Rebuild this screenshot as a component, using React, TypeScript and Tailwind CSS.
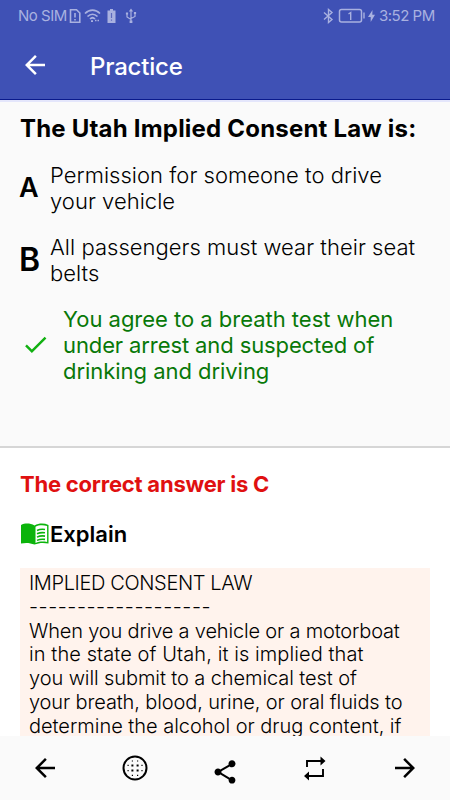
import { MdArrowBack, MdArrowForward, MdCheck, MdShare } from "react-icons/md";

const answers = [
  { letter: "A", size: "text-[27px]", lines: ["Permission for someone to drive", "your vehicle"] },
  { letter: "B", size: "text-[32px]", lines: ["All passengers must wear their seat", "belts"] },
];

const correct = [
  { text: "You agree to a breath test when", cls: "tracking-[-0.02px]" },
  { text: "under arrest and suspected of", cls: "tracking-[-0.11px]" },
  { text: "drinking and driving", cls: "tracking-[-0.04px]" },
];

const explanation = [
  { text: "IMPLIED CONSENT LAW", cls: "tracking-[-0.37px]" },
  { text: "-------------------", cls: "tracking-[0.53px]" },
  { text: "When you drive a vehicle or a motorboat", cls: "tracking-[-0.17px]" },
  { text: "in the state of Utah, it is implied that", cls: "tracking-[0.09px]" },
  { text: "you will submit to a chemical test of", cls: "tracking-[-0.09px]" },
  { text: "your breath, blood, urine, or oral fluids to", cls: "tracking-[-0.12px]" },
  { text: "determine the alcohol or drug content, if", cls: "tracking-[-0.02px]" },
];

function StatusBar() {
  return (
    <div className="flex h-8 items-center pl-[18px] pr-[15px] text-[15px] text-[#a9b1e0]">
      <span className="w-[49px] whitespace-nowrap tracking-[-0.5px]">No SIM</span>
      <svg className="ml-0.5 h-4 w-3" viewBox="0 0 12 16" fill="none" stroke="currentColor" strokeWidth="1.6">
        <path d="M1.500 1.700h6L10.800 5v9.300H1.500zM6 5v4.500M6 11v1.600" />
      </svg>
      <svg className="ml-[3px] h-4 w-[17px]" viewBox="0 0 17 16" fill="none" stroke="currentColor" strokeWidth="1.7">
        <path d="M1 5.500C5.500 1 11.500 1 16 5.500M3.500 8.500C6.500 5.500 10.500 5.500 13.500 8.500M6 11c1.500-1.500 3.500-1.500 5 0" />
        <path d="M7 13.200h2M11 12.500h1.500M13.500 12.500H15" />
      </svg>
      <svg className="ml-[6px] h-4 w-[9px]" viewBox="0 0 9 16">
        <path fill="currentColor" d="M3 1h3v1.500h2.500v12.500h-8V2.500H3z" />
        <path stroke="#5d69bd" strokeWidth="1.200" d="M4.500 5v5M4.500 11.500v1.300" />
      </svg>
      <svg className="ml-[9px] h-4 w-3" viewBox="0 0 12 16" fill="none" stroke="currentColor" strokeWidth="1.200">
        <path d="M6 2v12M2 6v3l4 2.500M10 5v3.500L6 10.500M4.500 3.500L6 1.500l1.500 2" />
        <path fill="currentColor" d="M1.500 5h1v1h-1zM9.500 4.500h1v1h-1zM5.200 13h1.600v1.500H5.200z" />
      </svg>
      <svg className="ml-auto h-4 w-[11px]" viewBox="0 0 11 16" fill="none" stroke="currentColor" strokeWidth="1.400">
        <path d="M1 4.500l8 7-3.500 3v-13L9 4.500l-8 7" />
      </svg>
      <svg className="ml-1 h-4 w-[27px]" viewBox="0 0 27 16" fill="none" stroke="currentColor">
        <rect x="1.500" y="1.500" width="22" height="12.500" rx="2" strokeWidth="1.500" />
        <path strokeWidth="1.400" d="M10.500 6l2.200-1.500v7.500M26 4.500v6" />
      </svg>
      <svg className="ml-[3px] h-4 w-[7px]" viewBox="0 0 7 16" fill="currentColor">
        <path d="M4.500 2L0 9h2.700v5L7 6.800H4.300z" />
      </svg>
      <span className="ml-1 w-14 whitespace-nowrap tracking-[-0.5px]">3:52 PM</span>
    </div>
  );
}

function BookIcon() {
  return (
    <svg className="h-[22px] w-[29px]" viewBox="0 0 29 22">
      <path fill="#0bb40b" d="M1 2C5 0 10 0 14.500 2.500 19 0 24 0 28.500 2V20.500C23.500 19.500 19 19.700 14.500 21.500 10 19.700 5.500 19.500 1 20.500z" />
      <path fill="#fff" d="M15.500 3.700C19 2 23 1.900 27.100 3V19C23 18.200 19 18.500 15.500 20z" />
      <path fill="none" stroke="#0bb40b" strokeWidth="1.600" d="M17 7.500c2.500-1.200 5-1.500 8-1M17 10.800c2.500-1.200 5-1.500 8-1M17 14.100c2.500-1.200 5-1.500 8-1M17 17.400c2.500-1.200 5-1.500 8-1" />
    </svg>
  );
}

function GridIcon() {
  return (
    <svg className="size-[26px]" viewBox="0 0 26 26">
      <circle cx="13" cy="13" r="11.500" fill="none" stroke="#000" strokeWidth="2" />
      <path stroke="#000" strokeWidth="2" strokeDasharray="2 3.200" d="M9.400 10.400h7.400M9.400 15.600h7.400" />
      <path stroke="#000" strokeWidth="1.200" strokeDasharray="1.200 4" d="M9.800 6h7.500M9.800 20.400h7.500M5.500 10.400h1.200M5.500 15.600h1.200M19.400 10.400h1.200M19.400 15.600h1.200" />
    </svg>
  );
}

function RepeatIcon() {
  return (
    <svg className="h-[26px] w-6" viewBox="0 0 24 26">
      <path fill="none" stroke="#000" strokeWidth="1.900" d="M4 12V6h15M20 14v7H5" />
      <path d="M17.500 1.500L22.500 6l-5 4.500zM6 16.500L1 21l5 4.500z" />
    </svg>
  );
}

export default function App() {
  return (
    <div className="flex h-[800px] w-[450px] flex-col overflow-hidden bg-white font-['Inter',sans-serif] text-black">
      <header className="h-[100px] shrink-0 border-b border-[#0a1a8c] bg-[#3f51b5]">
        <StatusBar />
        <div className="flex h-[66px] items-center pl-5 text-white">
          <MdArrowBack className="size-[30px]" />
          <h1 className="ml-10 pt-1 text-2xl font-medium tracking-[-0.2px]">Practice</h1>
        </div>
      </header>

      <section className="h-[348px] shrink-0 border-b-2 border-[#d6d6d6] bg-[#fafafa]">
        <div className="h-0.5 bg-[#e4e6fb]" />
        <div className="px-5 pt-3">
          <h2 className="whitespace-nowrap text-2xl font-bold leading-[30px] tracking-[0.2px]">
            The Utah Implied Consent Law is:
          </h2>
          <div className="mt-[18px] flex flex-col gap-5">
            {answers.map((answer) => (
              <div key={answer.letter} className="flex h-[52px] items-center">
                <span className={`-ml-px mr-px w-[30px] font-semibold tracking-tight ${answer.size}`}>{answer.letter}</span>
                <div className="text-[22px] font-light leading-[26px] tracking-[0.03px]">
                  {answer.lines.map((line) => (
                    <p key={line} className="whitespace-nowrap">{line}</p>
                  ))}
                </div>
              </div>
            ))}
            <div className="flex h-[78px] items-center">
              <MdCheck className="-mt-0.5 ml-px size-[29px] text-[#11b011]" />
              <div className="ml-[13px] text-[22px] leading-[26px] text-[#087808]">
                {correct.map((line) => (
                  <p key={line.text} className={`whitespace-nowrap ${line.cls}`}>{line.text}</p>
                ))}
              </div>
            </div>
          </div>
        </div>
      </section>

      <section className="min-h-0 flex-1 overflow-hidden px-5 pt-[21px]">
        <p className="whitespace-nowrap text-[22px] font-bold leading-[30px] tracking-[-0.22px] text-[#e01010]">
          The correct answer is C
        </p>
        <div className="mt-5 flex h-[30px] items-center">
          <BookIcon />
          <h3 className="ml-px text-[22px] font-semibold">Explain</h3>
        </div>
        <div className="mt-[19px] h-60 bg-[#fff3ed] pl-[9px] pt-1 text-xl font-light leading-[23.8px]">
          {explanation.map((line) => (
            <p key={line.text} className={`whitespace-nowrap ${line.cls}`}>{line.text}</p>
          ))}
        </div>
      </section>

      <nav className="flex h-16 shrink-0 items-center bg-[#fafafa] *:flex *:flex-1 *:justify-center">
        <div><MdArrowBack className="size-[30px]" /></div>
        <div><GridIcon /></div>
        <div><MdShare className="mr-px mt-2 size-7" /></div>
        <div><RepeatIcon /></div>
        <div><MdArrowForward className="size-[30px]" /></div>
      </nav>
    </div>
  );
}
